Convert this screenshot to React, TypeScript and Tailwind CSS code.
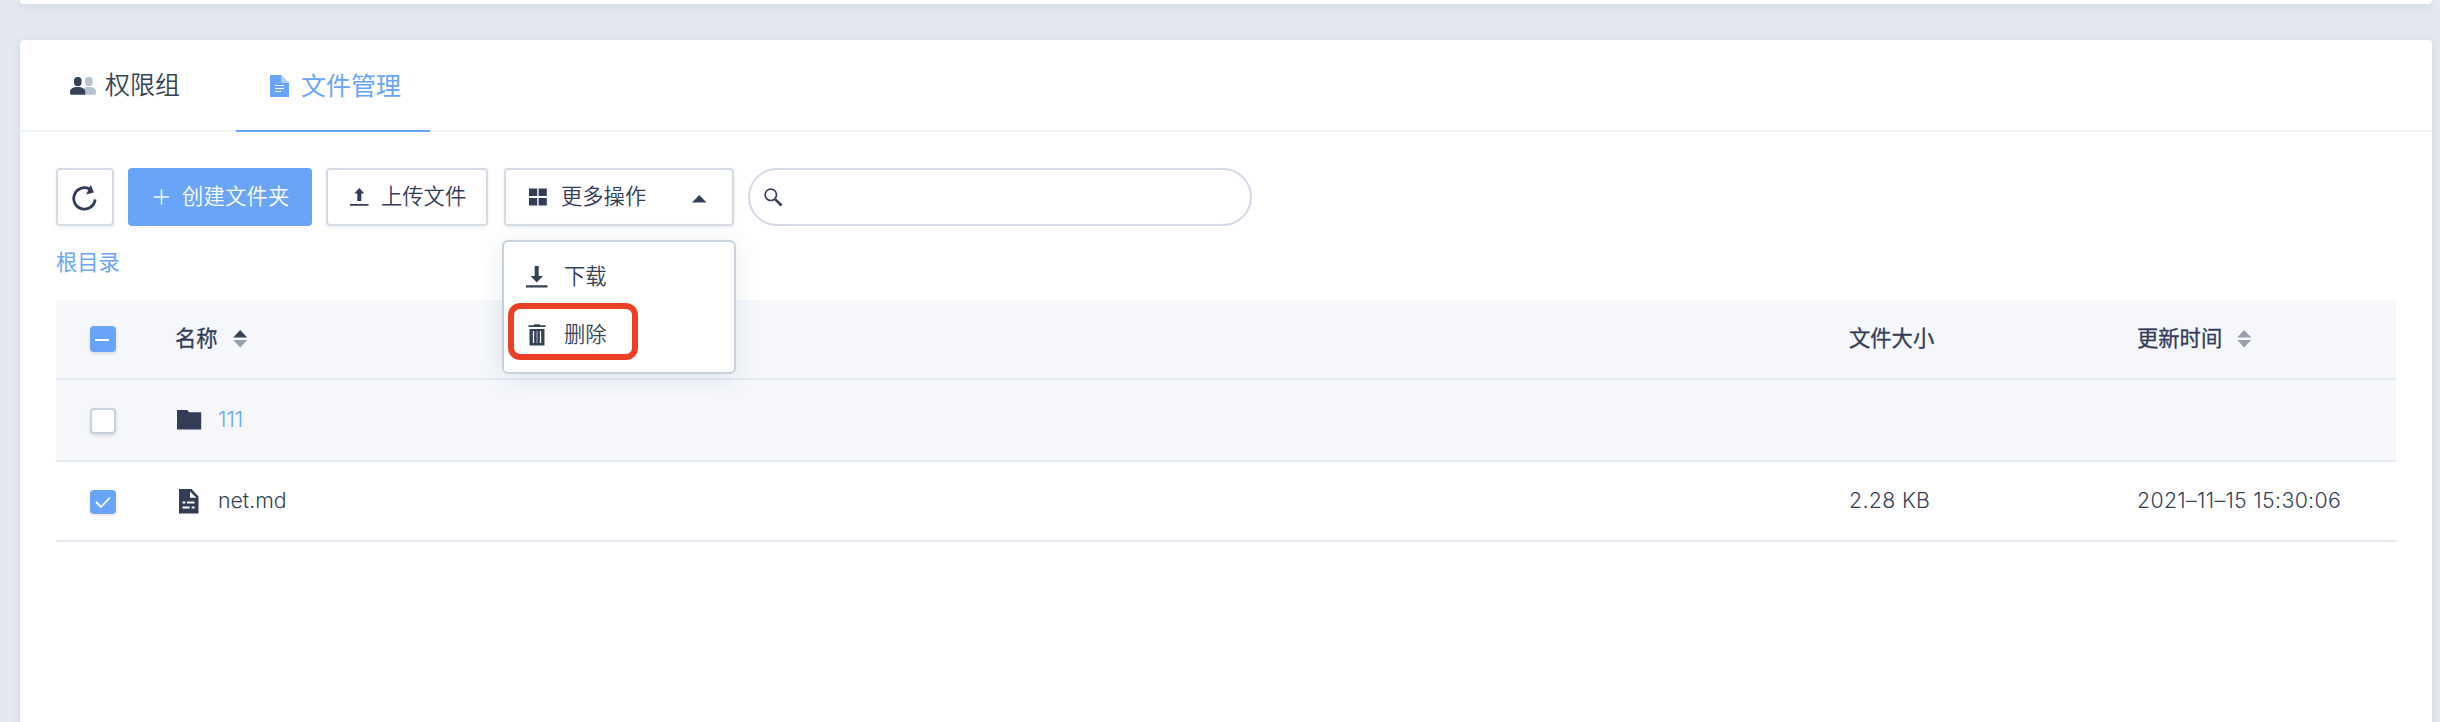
import type { ReactNode } from "react";

function UsersIcon() {
  return (
    <svg className="mt-[2px]" width="27" height="20" viewBox="0 0 27 20" fill="none">
      <g fill="#b8c2cf">
        <rect x="15" y="1" width="7.600" height="9" rx="3.600" />
        <path d="M14 18.800V12.500C15.500 11.300 17 11 19 11c4.400 0 7 1.600 7 5.200 0 1.800-.5 2.600-1.600 2.600z" />
      </g>
      <g fill="#344256">
        <rect x="4" y="1" width="7.600" height="9" rx="3.600" />
        <path d="M0 16.200C0 12.600 3 11 7.600 11s7.600 1.600 7.600 5.200v2.600H1.400C.4 18.800 0 18 0 16.200z" />
      </g>
    </svg>
  );
}

function DocIcon() {
  return (
    <svg className="mt-[2px]" width="19" height="22" viewBox="0 0 19 22" fill="none">
      <path d="M0 0h11.500v7.500H19V22H0z" fill="#68a5f8" />
      <path d="M11.500 0L19 7.500h-7.500z" fill="#b3d2fb" />
      <path d="M5 10.500h9M5 13.500h9M5 16.500h6" stroke="#fff" strokeWidth="1.200" />
    </svg>
  );
}

function RefreshIcon() {
  return (
    <svg className="mt-[2px]" width="26" height="28" viewBox="0 0 26 28" fill="none">
      <path d="M23.100 15.500A10.700 10.700 0 1 1 17.500 5" stroke="#323c56" strokeWidth="2.800" />
      <path d="M18.800 .8l3 7.700-7.600 2z" fill="#323c56" />
    </svg>
  );
}

function UploadIcon() {
  return (
    <svg width="19" height="20" viewBox="0 0 19 20" fill="#323c56">
      <path d="M9.300 1l5 5.400h-3V14h-4V6.400h-3zM0 17h18.500v1.800H0z" />
    </svg>
  );
}

function GridIcon() {
  return (
    <svg width="18" height="18" viewBox="0 0 18 18" fill="#323c56">
      <path d="M0 .5h8.200v7.600H0zM9.600.5h8.200v7.600H9.600zM0 10h8.200v7.600H0zM9.600 10h8.200v7.600H9.600z" />
    </svg>
  );
}

function DownloadIcon() {
  return (
    <svg width="22" height="22" viewBox="0 0 22 22" fill="#344256">
      <path d="M8.700 0h4v10H17l-6.300 6.400L4.700 10h4zM0 19.200h21.500v2.200H0z" />
    </svg>
  );
}

function TrashIcon() {
  return (
    <svg width="18" height="22" viewBox="0 0 18 22" fill="none">
      <path d="M.5 2.200h17M6 1.200h6" stroke="#344256" strokeWidth="1.800" />
      <path d="M1.500 5H16.500V21.500H1.500z" fill="#344256" />
      <path d="M5.500 7v12M12.500 7v12" stroke="#fff" strokeWidth="1.300" />
      <path d="M9 7v12" stroke="#aab3bf" strokeWidth="1" />
    </svg>
  );
}

function SearchIcon() {
  return (
    <svg width="19" height="19" viewBox="0 0 19 19" fill="none" stroke="#323c56">
      <circle cx="6.800" cy="6.800" r="5.700" strokeWidth="1.700" />
      <path d="M11.300 11.300l6.200 6.200" strokeWidth="2.600" />
    </svg>
  );
}

function FolderIcon() {
  return (
    <svg width="25" height="20" viewBox="0 0 25 20" fill="#323c56">
      <path d="M0 0h10.200l2 2.200h12V19.500H0z" />
    </svg>
  );
}

function FileIcon() {
  return (
    <svg width="20" height="25" viewBox="0 0 20 25" fill="none">
      <path d="M0 0h12.500l7 7.500V24.500H0z" fill="#323c56" />
      <path d="M11 2.500v6.300h6.500z" fill="#fff" />
      <path d="M3.500 13.500h2.800M8 13.500h7.500M3.500 18.500h7.200M12.700 18.500h2.800" stroke="#fff" strokeWidth="2" />
    </svg>
  );
}

function SortArrows({ up }: { up: string }) {
  return (
    <svg width="15" height="18" viewBox="0 0 15 18">
      <path d="M7.200 0l7 7.500H.2z" fill={up} />
      <path d="M7.200 17.500l7-7.500H.2z" fill="#98a0ac" />
    </svg>
  );
}

const outlined =
  "flex h-[58px] shrink-0 items-center rounded border-2 border-[#d4dae6] bg-white text-[#323c56] shadow-[0_2px_4px_rgba(50,60,86,0.08)]";

function Label({ children, className = "" }: { children: ReactNode; className?: string }) {
  return <span className={`whitespace-nowrap pb-[2px] text-[21.300px] leading-8 ${className}`}>{children}</span>;
}

export default function App() {
  return (
    <div className="flex h-[722px] w-[2440px] flex-col overflow-hidden bg-[#e4e9f1] pr-2 pl-5 font-['Inter','Noto_Sans_CJK_SC',sans-serif] text-[#344256]">
      <div className="h-1 shrink-0 rounded-b bg-white shadow-[0_2px_8px_rgba(50,60,86,0.1)]" />
      <main className="mt-9 flex h-[720px] shrink-0 flex-col rounded bg-white shadow-[0_2px_8px_rgba(50,60,86,0.1)]">
        <nav className="flex h-[92px] shrink-0 border-b-2 border-[#f3f4fa] text-[25px] leading-9">
          <div className="flex w-[216px] items-center pl-[50px]">
            <UsersIcon />
            <span className="ml-2 font-[350]">权限组</span>
          </div>
          <div className="-mb-[2px] flex w-[194px] items-center border-b-2 border-[#68a5f8] pl-[34px] text-[#68a5f8]">
            <DocIcon />
            <span className="ml-3 pt-px">文件管理</span>
          </div>
        </nav>

        <div className="flex flex-col px-9 pt-9">
          <div className="flex">
            <button className={`${outlined} w-[58px] justify-center`}>
              <RefreshIcon />
            </button>
            <button className="ml-[14px] flex h-[58px] w-[184px] items-center rounded bg-[#68a5f8] pl-[26px] text-white">
              <svg width="15" height="16" viewBox="0 0 15 16" stroke="#fff" strokeWidth="1.500">
                <path d="M0 8h15M7.500 .5v15" />
              </svg>
              <Label className="ml-[13px] font-[350] tracking-[0.2px]">创建文件夹</Label>
            </button>
            <button className={`${outlined} ml-[14px] w-[162px] pl-[22px]`}>
              <UploadIcon />
              <Label className="ml-3 font-[350]">上传文件</Label>
            </button>
            <div className="relative ml-4">
              <button className={`${outlined} w-[230px] pl-[23px]`}>
                <GridIcon />
                <Label className="ml-[14px] font-[350]">更多操作</Label>
                <svg className="mt-[3px] ml-[46px]" width="15" height="8" viewBox="0 0 15 8">
                  <path d="M7.300 0L14.500 7.500H.1z" fill="#323c56" />
                </svg>
              </button>
              <div className="absolute top-[72px] -left-[2px] z-10 h-[134px] w-[234px] rounded-md border-2 border-[#c7d0dd] bg-white pt-[7px] shadow-[0_4px_24px_rgba(50,60,86,0.11)]">
                <div className="flex h-[56px] items-center pl-[22px]">
                  <DownloadIcon />
                  <Label className="ml-[16px] font-[350]">下载</Label>
                </div>
                <div className="-mt-[2px] ml-1 flex h-[57px] w-[130px] items-center rounded-xl border-6 border-[#ec4024] pt-[6px] pl-[14px]">
                  <TrashIcon />
                  <Label className="ml-[18px] font-[350]">删除</Label>
                </div>
              </div>
            </div>
            <div className="ml-[14px] flex h-[58px] w-[504px] items-center rounded-full border-2 border-[#d4dae6] pl-[14px]">
              <SearchIcon />
              <input className="ml-3 min-w-0 flex-1 bg-transparent outline-none" />
            </div>
          </div>

          <a className="mt-5 flex h-[34px] items-center text-[#68a5f8]">
            <Label>根目录</Label>
          </a>

          <section className="mt-5 flex flex-col">
            <div className="flex h-20 items-center border-b-2 border-[#e4e9f1] bg-[#f5f7fb] pl-[34px] text-[#323c56]">
              <div className="flex size-[26px] items-center justify-center rounded bg-[#68a5f8] pt-[2px] pr-[2px] shadow-[0_2px_3px_rgba(50,60,86,0.12)]">
                <div className="h-[2px] w-[14px] bg-white" />
              </div>
              <div className="flex w-[1733px] items-center pl-[59px]">
                <Label className="mr-[15px] [-webkit-text-stroke:0.3px]">名称</Label>
                <SortArrows up="#344256" />
              </div>
              <Label className="w-[288px] [-webkit-text-stroke:0.3px]">文件大小</Label>
              <Label className="mr-[15px] [-webkit-text-stroke:0.3px]">更新时间</Label>
              <SortArrows up="#98a0ac" />
            </div>
            <div className="flex h-[82px] items-center border-b-2 border-[#e4e9f1] bg-[#f5f7fb] pl-[34px]">
              <div className="mt-[2px] size-[26px] rounded border-2 border-[#c7d0dd] bg-white shadow-[0_2px_3px_rgba(50,60,86,0.12)]" />
              <div className="flex items-center pl-[61px]">
                <FolderIcon />
                <Label className="ml-4 font-light text-[#68a5f8]">111</Label>
              </div>
            </div>
            <div className="flex h-20 items-center border-b-2 border-[#e4e9f1] pl-[34px]">
              <div className="mt-[2px] flex h-6 w-[26px] items-center justify-center rounded bg-[#68a5f8] shadow-[0_2px_3px_rgba(50,60,86,0.12)]">
                <svg width="16" height="13" viewBox="0 0 16 13" fill="none" stroke="#fff" strokeWidth="1.800">
                  <path d="M1 6l5 5L15 1.500" />
                </svg>
              </div>
              <div className="flex w-[1733px] items-center pl-[63px]">
                <FileIcon />
                <Label className="ml-[19px] font-[330]">net.md</Label>
              </div>
              <Label className="w-[288px] font-[330] tracking-[0.350px]">2.28 KB</Label>
              <Label className="font-[330] tracking-[0.330px]">2021–11–15 15:30:06</Label>
            </div>
          </section>
        </div>
      </main>
    </div>
  );
}
